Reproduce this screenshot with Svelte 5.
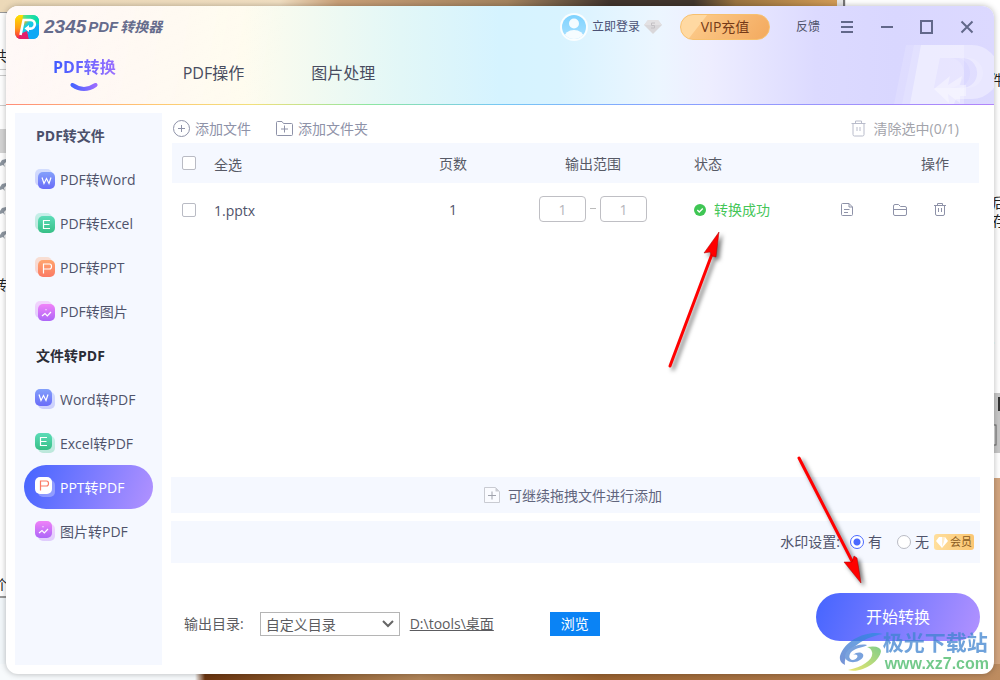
<script>
  const tabs = ['PDF转换', 'PDF操作', '图片处理'];
  let activeTab = $state('PDF转换');
  let active = $state('PPT转PDF');
  let watermark = $state('yes');
  let folder = $state('自定义目录');
  let from = $state('1');
  let to = $state('1');

  const groups = [
    {
      title: 'PDF转文件',
      flip: false,
      items: [
        { label: 'PDF转Word', kind: 'word' },
        { label: 'PDF转Excel', kind: 'excel' },
        { label: 'PDF转PPT', kind: 'ppt' },
        { label: 'PDF转图片', kind: 'image' }
      ]
    },
    {
      title: '文件转PDF',
      flip: true,
      items: [
        { label: 'Word转PDF', kind: 'word' },
        { label: 'Excel转PDF', kind: 'excel' },
        { label: 'PPT转PDF', kind: 'ppt' },
        { label: '图片转PDF', kind: 'image' }
      ]
    }
  ];

  const glyphs = {
    word: 'M4 5.5 L6 11.5 L8.5 6.5 L11 11.5 L13 5.5',
    excel: 'M12 4.5 H5.5 V12.5 H12 M5.5 8.5 H11.5',
    ppt: 'M5.5 13.5 V4 H11.5 Q13.5 4 13.5 6.5 Q13.5 9 11.5 9 H5.5',
    image: 'M4 12 L7 9.5 L9.3 11.8 L13 8 M8 5.3 V6.3'
  };
</script>

<div class="desktop">
  <svg class="backdrop" viewBox="0 0 1000 680" preserveAspectRatio="none" aria-hidden="true">
    <defs>
      <linearGradient id="top">
        <stop offset="0" stop-color="#ecd9b8" /><stop offset=".33" stop-color="#f1dfc2" />
        <stop offset=".4" stop-color="#c9a078" /><stop offset=".6" stop-color="#a4835f" />
        <stop offset=".72" stop-color="#41352d" /><stop offset=".82" stop-color="#41352d" />
        <stop offset=".87" stop-color="#9b7440" /><stop offset="1" stop-color="#d8a058" />
      </linearGradient>
      <linearGradient id="bottom">
        <stop offset="0" stop-color="#f7fafc" /><stop offset=".195" stop-color="#f7fafc" />
        <stop offset=".205" stop-color="#6b3510" /><stop offset=".3" stop-color="#8c5a2c" />
        <stop offset=".42" stop-color="#b08458" /><stop offset=".6" stop-color="#9a6230" />
        <stop offset="1" stop-color="#bd8c60" />
      </linearGradient>
    </defs>
    <rect width="1000" height="680" fill="#fff" />
    <rect width="846" height="12" fill="url(#top)" />
    <rect x="837" width="9" height="12" fill="#e6e6e6" />
    <rect x="843" width="2" height="12" fill="#777" />
    <rect y="12" width="10" height="1" fill="#999" />
    <rect y="129" width="10" height="24" fill="#d4d4d4" />
    <path d="M0 69.5H10M0 75.5H10M0 105.5H10" stroke="#ccc" />
    <path d="M0 166V163L2 160L6 159V162L4 164L5 167L3 165zM0 190V187L2 184L6 183V186L4 188L5 191L3 189zM0 214V211L2 208L6 207V210L4 212L5 215L3 213zM0 238V235L2 232L6 231V234L4 236L5 239L3 237z" fill="#8d96a0" />
    <rect y="596" width="10" height="84" fill="#f3f8fb" />
    <rect y="596" width="10" height="2" fill="#999" />
    <rect x="985" y="393" width="15" height="60" fill="#c8c8c8" />
    <rect x="985" y="425" width="11" height="20" fill="#ddd" stroke="#666" />
    <rect x="998" y="397" width="2" height="14" fill="#333" />
    <rect x="985" y="478" width="15" height="202" fill="#d3a57f" />
    <rect y="664" width="1000" height="16" fill="url(#bottom)" />
    <g class="behind">
      <text x="-7" y="61">共</text><text x="-7" y="290">转</text><text x="-5" y="590">个</text>
      <text x="990" y="85">件</text><text x="992" y="208">后</text><text x="992" y="226">存</text>
      <text x="991" y="344">.</text>
    </g>
  </svg>

  <main class="window">
    <header>
      <svg class="mark" viewBox="0 0 100 60" aria-hidden="true">
        <g fill="#fff">
          <path d="M12 1H70V60H0z" opacity=".14" />
          <path d="M20 1H70V60H8z" opacity=".14" />
          <path d="M27 1H78A27 27 0 0 1 78 55H62L60 60H16z M46 14L40 44H66A15 15 0 0 0 70 14z" fill-rule="evenodd" opacity=".38" />
          <path d="M46 14H56A14 15 0 0 1 56 44H40zM62 14A14 15 0 0 1 62 44H74A15 15 0 0 0 74 14z" opacity=".15" />
          <path d="M40 45L56 32L54 41L68 32L66 41H72V52H66L66 59L54 50L55 59z" opacity=".38" />
        </g>
      </svg>

      <div class="titlebar">
        <svg class="logo" width="24" height="24" viewBox="0 0 24 24" aria-hidden="true">
          <defs>
            <linearGradient id="lg1" x1="0" y1="0" x2="1" y2="1">
              <stop offset="0" stop-color="#ffe000" /><stop offset=".32" stop-color="#ffb400" />
              <stop offset=".45" stop-color="#19cfe0" /><stop offset="1" stop-color="#159cff" />
            </linearGradient>
            <linearGradient id="lg2" x1="0" y1="0" x2="1" y2="0">
              <stop offset="0" stop-color="#ffe000" /><stop offset=".5" stop-color="#3de09a" />
              <stop offset="1" stop-color="#00dcae" />
            </linearGradient>
            <linearGradient id="lg3" x1="0" y1="0" x2="0" y2="1">
              <stop offset="0" stop-color="#ffe100" /><stop offset=".55" stop-color="#ff9d18" />
              <stop offset="1" stop-color="#ff1c43" />
            </linearGradient>
            <clipPath id="lc"><rect width="24" height="24" rx="6" /></clipPath>
          </defs>
          <g clip-path="url(#lc)">
            <rect width="24" height="24" fill="url(#lg1)" />
            <path d="M0 0H24V9L8 4z" fill="url(#lg2)" />
            <path d="M0 0H8L5 20L9 24H0z" fill="url(#lg3)" />
            <path d="M5 19L12 16L14 24H3z" fill="#e4206c" />
            <path d="M12 15L24 10V24H14z" fill="#10a8f5" />
          </g>
          <path d="M5.5 20L8.6 5H15.5A4.3 4.3 0 0 1 15.5 13.6H12" fill="none" stroke="#fff" stroke-width="2.6" />
          <path d="M9.5 13.6L14 10V17z" fill="#fff" />
        </svg>
        <h1><b>2345</b><i>PDF</i><span>转换器</span></h1>

        <button class="login">
          <svg width="28" height="28" viewBox="0 0 28 28" aria-hidden="true">
            <defs>
              <linearGradient id="av" x1="0" y1="0" x2="0" y2="1"><stop stop-color="#7fd3ff" /><stop offset="1" stop-color="#a9e0ff" /></linearGradient>
              <clipPath id="avc"><circle cx="14" cy="14" r="12" /></clipPath>
            </defs>
            <circle cx="14" cy="14" r="14" fill="#fff" opacity=".85" />
            <circle cx="14" cy="14" r="12" fill="url(#av)" />
            <g clip-path="url(#avc)" fill="#fff" opacity=".9"><circle cx="14" cy="10.5" r="5" /><ellipse cx="14" cy="25" rx="10" ry="8" /></g>
          </svg>
          <span>立即登录</span>
          <svg width="18" height="16" viewBox="0 0 18 16" aria-hidden="true">
            <path d="M4 1H14L18 6L9 15L0 6z" fill="#d9d7da" />
            <path d="M4 1H14L18 6H0z" fill="#e3e1e3" />
            <path d="M11 4H7.500V6.500H10.500V9H7" fill="none" stroke="#c3c0c4" />
          </svg>
        </button>
        <button class="vip">VIP充值</button>
        <button class="feedback">反馈</button>
        <div class="controls">
          <button aria-label="菜单"><svg viewBox="0 0 14 14"><path d="M1 2H13M1 7H13M1 12H13" /></svg></button>
          <button aria-label="最小化"><svg viewBox="0 0 14 14"><path d="M1 7H13" /></svg></button>
          <button aria-label="最大化"><svg viewBox="0 0 14 14"><path d="M1 1H12V13H1z" /></svg></button>
          <button aria-label="关闭"><svg viewBox="0 0 14 14"><path d="M1.500 1.500L12.500 12.500M12.500 1.500L1.500 12.500" /></svg></button>
        </div>
      </div>

      <nav class="tabs">
        {#each tabs as tab}
          <button class:on={tab === activeTab} onclick={() => (activeTab = tab)}>
            <span>{tab}</span>
            {#if tab === activeTab}
              <svg width="28" height="9" viewBox="0 0 28 9" aria-hidden="true">
                <defs><linearGradient id="sm"><stop stop-color="#4763ff" /><stop offset="1" stop-color="#9a6cff" /></linearGradient></defs>
                <path d="M2.500 2Q14 10 25.500 2" fill="none" stroke="url(#sm)" stroke-width="4" stroke-linecap="round" />
              </svg>
            {/if}
          </button>
        {/each}
      </nav>
    </header>

    <div class="body">
      <svg width="0" height="0" class="defs" aria-hidden="true">
        <defs>
          <linearGradient id="word" x1="0" y1="0" x2="0" y2="1"><stop stop-color="#83a0fb" /><stop offset="1" stop-color="#6a6cf8" /></linearGradient>
          <linearGradient id="excel" x1="0" y1="0" x2="0" y2="1"><stop stop-color="#5cdcb8" /><stop offset="1" stop-color="#37bf86" /></linearGradient>
          <linearGradient id="ppt" x1="0" y1="0" x2="0" y2="1"><stop stop-color="#ffa56e" /><stop offset="1" stop-color="#fb7a64" /></linearGradient>
          <linearGradient id="image" x1="0" y1="0" x2="0" y2="1"><stop stop-color="#f082f8" /><stop offset="1" stop-color="#ad66f8" /></linearGradient>
        </defs>
      </svg>
      <aside>
        {#each groups as group}
          <h2 class:dark={group.flip}>{group.title}</h2>
          {#each group.items as item}
            {@const on = item.label === active}
            <button class="item" class:on onclick={() => (active = item.label)}>
              <svg width="20" height="20" viewBox="0 0 20 20" aria-hidden="true">
                <rect x={group.flip ? 3 : 0} y={group.flip ? 3 : 0} width="17" height="17" rx="5" fill={on ? '#fff' : `url(#${item.kind})`} opacity=".3" />
                <g transform={group.flip ? '' : 'translate(3 3)'}>
                  <rect width="17" height="17" rx="5" fill={on ? '#fff' : `url(#${item.kind})`} />
                  <path d={glyphs[item.kind]} fill="none" stroke={on ? '#fb7a64' : '#fff'} stroke-width="1.2" />
                </g>
              </svg>
              <span>{item.label}</span>
            </button>
          {/each}
        {/each}
      </aside>

      <section class="content">
        <div class="toolbar">
          <button>
            <svg width="17" height="17" viewBox="0 0 17 17"><circle cx="8.500" cy="8.500" r="8" /><path d="M5 8.500H12M8.500 5V12" /></svg>
            <span>添加文件</span>
          </button>
          <button>
            <svg width="17" height="17" viewBox="0 0 17 17"><path d="M.5 2.500Q.5 1.500 1.500 1.500H6L7.500 3.500H15.500Q16.500 3.500 16.500 4.500V14.500Q16.500 15.500 15.500 15.500H1.500Q.5 15.500 .5 14.500z M5 9H12M8.500 5.500V12.500" /></svg>
            <span>添加文件夹</span>
          </button>
          <button class="clear">
            <svg width="15" height="17" viewBox="0 0 15 17"><path d="M.5 3.500H14.500M4.500 3V1H10.500V3M2 4V14.500Q2 16 3.500 16H11.500Q13 16 13 14.500V4M6 7V11M9 7V11" /></svg>
            <span>清除选中(0/1)</span>
          </button>
        </div>

        <div class="list">
          <table>
            <colgroup><col class="c1" /><col class="c2" /><col class="c3" /><col class="c4" /><col class="c5" /><col class="c6" /></colgroup>
            <thead>
              <tr>
                <th><input type="checkbox" id="all" /></th>
                <th class="name"><label for="all">全选</label></th>
                <th>页数</th>
                <th>输出范围</th>
                <th class="status">状态</th>
                <th class="ops">操作</th>
              </tr>
            </thead>
            <tbody>
              <tr>
                <td><input type="checkbox" id="row1" /></td>
                <td class="name"><label for="row1">1.pptx</label></td>
                <td>1</td>
                <td>
                  <div class="range">
                    <input type="text" aria-label="起始页" bind:value={from} /><i></i><input type="text" aria-label="结束页" bind:value={to} />
                  </div>
                </td>
                <td class="status">
                  <div class="done">
                    <svg width="12" height="12" viewBox="0 0 12 12" aria-hidden="true"><circle cx="6" cy="6" r="6" fill="#3fc654" /><path d="M3.300 6L5.300 8L8.800 4.500" fill="none" stroke="#fff" stroke-width="1.300" /></svg>
                    <span>转换成功</span>
                  </div>
                </td>
                <td class="ops">
                  <div class="acts">
                    <button class="open" aria-label="打开文件"><svg viewBox="0 0 14 14"><path d="M9 .5H2.500Q1.500 .5 1.500 1.500V11.500Q1.500 12.500 2.500 12.500H11.500Q12.500 12.500 12.500 11.500V4L9 .5V4H12.500M4 6.500H9.500M4 9.500H8" /></svg></button>
                    <button class="dir" aria-label="打开文件夹"><svg viewBox="0 0 14 14"><path d="M.5 3Q.5 1.500 2 1.500H5.500L7.500 3.500H12Q13.500 3.500 13.500 5V11Q13.500 12.500 12 12.500H2Q.5 12.500 .5 11zM.5 6.500H13.500" /></svg></button>
                    <button aria-label="删除"><svg viewBox="0 0 14 14"><path d="M1 2.500H13M4.500 2.500V.5H9.500V2.500M2.500 3V11Q2.500 12.500 4 12.500H10Q11.500 12.500 11.500 11V3M5.500 5V9M8.500 5V9" /></svg></button>
                  </div>
                </td>
              </tr>
            </tbody>
          </table>
        </div>

        <div class="drop">
          <svg width="16" height="16" viewBox="0 0 16 16" aria-hidden="true"><path d="M.5 .5H11.500L15.500 4.500V15.500H.5z" fill="#fafbff" stroke="#c9cbd2" /><path d="M11.500 .5V4.500H15.500z" fill="#c9cbd2" /><path d="M4 8.500H12M8 4.500V12.500" stroke="#9fa2ac" /></svg>
          <span>可继续拖拽文件进行添加</span>
        </div>

        <div class="settings" role="radiogroup" aria-label="水印设置">
          <span>水印设置:</span>
          <label class="r1"><input type="radio" name="wm" value="yes" bind:group={watermark} />有</label>
          <label class="r2"><input type="radio" name="wm" value="no" bind:group={watermark} />无</label>
          <span class="badge">
            <svg width="12" height="11" viewBox="0 0 12 11" aria-hidden="true"><path d="M3 0H9L12 4L6 11L0 4z" fill="#fff" /><path d="M6 0H9L8 5L6 10z" fill="#ffecc8" /></svg>会员
          </span>
        </div>

        <footer>
          <div class="output">
            <label for="dir">输出目录:</label>
            <div class="select">
              <select id="dir" bind:value={folder}><option>自定义目录</option><option>原文件目录</option></select>
              <svg width="12" height="8" viewBox="0 0 12 8" aria-hidden="true"><path d="M1 1L6 6L11 1" fill="none" stroke="#666" stroke-width="2" /></svg>
            </div>
            <a href="#desktop">D:\tools\桌面</a>
            <button class="browse">浏览</button>
          </div>
          <button class="start">开始转换</button>
        </footer>
      </section>
    </div>
  </main>

  <svg class="arrow one" width="64" height="150" viewBox="0 0 64 150" aria-hidden="true">
    <path d="M10 136L52 24" stroke="#f00" stroke-width="3" stroke-linecap="round" />
    <path d="M59 2L44 23L50 22L52 26L56 27z" fill="#f00" stroke="#a00" stroke-width=".5" />
  </svg>
  <svg class="arrow two" width="80" height="140" viewBox="0 0 80 140" aria-hidden="true">
    <path d="M9 9L64 116" stroke="#f00" stroke-width="3" stroke-linecap="round" />
    <path d="M71 134L54 113L62 113L64 107L67 109z" fill="#f00" stroke="#a00" stroke-width=".5" />
  </svg>

  <div class="site">
    <svg width="44" height="42" viewBox="0 0 44 42" aria-hidden="true">
      <defs>
        <linearGradient id="sg1" x1="0" y1="1" x2="1" y2="0"><stop stop-color="#4a6fc8" /><stop offset="1" stop-color="#2d8fe0" /></linearGradient>
        <linearGradient id="sg2" x1="0" y1="1" x2="1" y2="0"><stop stop-color="#e6e040" /><stop offset="1" stop-color="#58bd62" /></linearGradient>
      </defs>
      <path d="M44 2C28 -2 6 8 1 24C0 30 4 32 6 33C4 22 20 6 44 2z" fill="url(#sg1)" />
      <path d="M28 13C18 11 7 17 6 24C6 32 20 32 24 25C26 20 18 19 14 23C20 21 20 27 14 28C9 28 9 21 15 18C20 15 26 15 28 13z" fill="#4d83d2" />
      <path d="M28 15Q41 13 42 19C41 30 22 42 9 38C24 35 35 27 33 20Q32 16 28 15z" fill="url(#sg2)" />
    </svg>
    <div><strong>极光下载站</strong><em>www.xz7.com</em></div>
  </div>
</div>

<style>
  :global(body) { margin: 0; }
  * { box-sizing: border-box; }
  .desktop {
    position: relative;
    display: flex;
    min-height: 100vh;
    padding: 6px;
    overflow: hidden;
    font: 14px/20px "Open Sans", "Noto Sans CJK SC", sans-serif;
    color: #4f536b;
  }
  .backdrop { position: absolute; inset: 0; width: 100%; height: 100%; }
  .behind { font-size: 14px; fill: #222; }
  button {
    display: flex;
    align-items: center;
    padding: 0;
    border: 0;
    background: none;
    font: inherit;
    color: inherit;
    cursor: pointer;
    white-space: nowrap;
  }
  svg { display: block; flex: none; }
  .window {
    position: relative;
    display: flex;
    flex-direction: column;
    flex: 1;
    min-width: 0;
    overflow: hidden;
    border-radius: 12px;
    background: #fff;
    box-shadow: 0 0 6px rgba(0, 0, 0, .28);
  }
  header {
    position: relative;
    height: 99px;
    border-bottom: 1px solid;
    border-image: linear-gradient(90deg, #ff8c78, #ffc873 15%, #f2e07c 25%, #8de6a2 37%, #78c8f4 50%, #84a4ff 65%, #b184fa) 1;
    background:
      linear-gradient(100deg, rgba(255, 255, 255, .6), rgba(255, 255, 255, 0) 28%),
      linear-gradient(90deg, #fff0ec, #fff6ee 12%, #fffcee 24%, #f2faf1 31%, #e2f7f7 40%, #d5f3ff 50%, #d8f3ff 56%, #ecf6ff 66%, #eeeeff 71%, #dcdaff 82%, #d9d7ff 90%, #dcd9ff);
  }
  .mark { position: absolute; right: 0; bottom: 0; width: 100px; height: 60px; }
  .titlebar {
    position: relative;
    display: flex;
    align-items: center;
    height: 42px;
    padding: 0 20px 0 9px;
    font-size: 12px;
  }
  h1 {
    display: flex;
    align-items: center;
    gap: 2px;
    margin: 0 auto 0 5px;
    font: italic bold 14px/20px "Liberation Sans", "Noto Sans CJK SC", sans-serif;
    color: #656b8c;
  }
  h1 b { font-size: 19px; }
  h1 i { font-size: 15px; }
  .login { gap: 4px; margin-right: 18px; }
  .login span { color: #4b5175; }
  .vip {
    justify-content: center;
    width: 90px;
    height: 26px;
    margin-right: 26px;
    border: 1px solid #f7c06e;
    border-radius: 13px;
    background: linear-gradient(128deg, #ffd9a2 24%, #fbc684 25%, #f3a95e);
    font-size: 14px;
    color: #753a18;
  }
  .feedback { margin-right: 20px; }
  .controls { display: flex; gap: 26px; }
  .controls svg { width: 14px; height: 14px; fill: none; stroke: #62688a; stroke-width: 2; }
  .tabs {
    position: relative;
    display: flex;
    align-items: flex-start;
    gap: 67px;
    padding-left: 47px;
    font-size: 16px;
  }
  .tabs button { flex-direction: column; padding-top: 15px; color: #484c60; }
  .tabs .on { gap: 6px; padding-top: 9px; font-weight: bold; }
  .tabs .on span {
    background: linear-gradient(90deg, #3f5bff, #9a70ff);
    background-clip: text;
    color: transparent;
  }
  .body { display: flex; flex: 1; gap: 9px; padding: 8px 14px 9px 9px; }
  .defs { position: absolute; }
  aside { width: 147px; flex: none; background: #f5f8ff; }
  h2 {
    margin: 0;
    padding: 2px 0 0 21px;
    font-size: 14px;
    line-height: 42px;
    color: #4b506b;
  }
  h2.dark { color: #2b2d36; }
  .item {
    gap: 5px;
    width: 129px;
    height: 44px;
    margin: 0 9px;
    padding-left: 11px;
    border-radius: 22px;
  }
  .item span { padding-top: 2px; }
  .item.on { background: linear-gradient(110deg, #4565ff, #b292ff); color: #fff; }
  .content { display: flex; flex-direction: column; flex: 1; min-width: 0; }
  .toolbar { display: flex; gap: 25px; height: 30px; padding: 0 21px 0 2px; color: #8e92a8; }
  .toolbar button { gap: 5px; }
  .toolbar span, .name label { display: block; padding-top: 2px; }
  .toolbar svg, .acts svg { fill: none; stroke: #8e92a8; }
  .toolbar .clear { gap: 8px; margin-left: auto; color: #a3a4ab; }
  .toolbar .clear svg { stroke: #b9bccb; }
  .list { flex: 1; padding: 0 1px; }
  table { width: 100%; table-layout: fixed; border-collapse: collapse; }
  th, td { padding: 0; font-weight: normal; text-align: center; }
  th { height: 40px; padding-top: 2px; background: #f5f8ff; color: #575a66; }
  th:first-child { padding-top: 0; }
  td { height: 54px; }
  .c1 { width: 34px; }
  .c3, .c4 { width: 140px; }
  .c5, .c6 { width: 158px; }
  .name { padding-left: 8px; text-align: left; }
  .status { padding-left: 31px; text-align: left; }
  .ops { padding-right: 30px; text-align: right; }
  input[type="checkbox"] {
    appearance: none;
    display: block;
    width: 14px;
    height: 14px;
    margin: 0 auto;
    border: 1px solid #b9bbc4;
    border-radius: 2px;
    background: #fff;
  }
  input[type="checkbox"]:checked { background: #4a69ff; }
  .range { display: flex; align-items: center; justify-content: center; gap: 4px; padding-bottom: 3px; }
  .range i { width: 6px; height: 1px; background: #bbb; }
  .range input {
    width: 47px;
    height: 26px;
    padding: 2px 0 0;
    border: 1px solid #bfbfc4;
    border-radius: 4px;
    background: #fff;
    font: inherit;
    text-align: center;
    color: #b5b5bb;
  }
  .done { display: flex; align-items: center; gap: 8px; color: #45c658; }
  .acts { display: flex; justify-content: flex-end; padding-right: 2px; }
  .acts svg { width: 14px; height: 14px; }
  .open { margin-right: 39px; }
  .dir { margin-right: 26px; }
  .drop, .settings { display: flex; align-items: center; background: #f5f8ff; }
  .drop { justify-content: center; gap: 8px; height: 36px; margin-bottom: 8px; padding-right: 5px; color: #61657d; }
  .drop span { padding-top: 2px; }
  .settings { justify-content: flex-end; height: 42px; padding-right: 6px; }
  .settings label { display: flex; align-items: center; gap: 4px; }
  .r1 { margin: 0 15px 0 10px; }
  .r2 { margin-right: 5px; }
  input[type="radio"] {
    appearance: none;
    width: 14px;
    height: 14px;
    margin: 0;
    border: 1px solid #b9bbc4;
    border-radius: 50%;
    background: #fff;
  }
  input[type="radio"]:checked {
    border-color: #4a69ff;
    background: radial-gradient(#4a69ff 3px, #fff 4px);
  }
  .badge {
    display: flex;
    align-items: center;
    gap: 2px;
    height: 16px;
    padding: 0 2px;
    border-radius: 3px;
    background: linear-gradient(90deg, #ffdf9d, #fbc672);
    font-size: 11px;
    color: #8a5a20;
  }
  footer { display: flex; align-items: flex-start; justify-content: space-between; height: 102px; padding: 30px 0 0 13px; }
  .output { display: flex; align-items: center; margin-top: 19px; color: #5c5c60; }
  .select { display: grid; align-items: center; margin: 0 10px 0 16px; }
  .select > * { grid-area: 1 / 1; }
  .select svg { justify-self: end; margin-right: 6px; pointer-events: none; }
  select {
    appearance: none;
    width: 140px;
    height: 24px;
    padding: 1px 5px 0;
    border: 1px solid #b5b5b5;
    border-radius: 0;
    background: #fff;
    font: inherit;
    color: #5c5c60;
  }
  a { color: inherit; }
  .browse {
    justify-content: center;
    width: 50px;
    height: 24px;
    margin-left: 56px;
    background: #0a83f5;
    color: #fff;
  }
  .start {
    justify-content: center;
    width: 164px;
    height: 48px;
    border-radius: 24px;
    background: linear-gradient(110deg, #4565ff, #b292ff);
    font-size: 16px;
    color: #fff;
  }
  .arrow { position: absolute; fill: none; filter: drop-shadow(3px 3px 2px rgba(0, 0, 0, .55)); pointer-events: none; }
  .one { left: 660px; top: 230px; }
  .two { left: 790px; top: 449px; }
  .site { position: absolute; right: 11px; bottom: 6px; display: flex; align-items: flex-end; opacity: .75; pointer-events: none; }
  .site div { display: flex; flex-direction: column; }
  .site strong {
    font-size: 21px;
    line-height: 24px;
    color: #3f84cf;
  }
  .site em {
    padding-left: 2px;
    font: bold 16px/20px "Liberation Sans", sans-serif;
    color: #45b865;
  }
</style>
